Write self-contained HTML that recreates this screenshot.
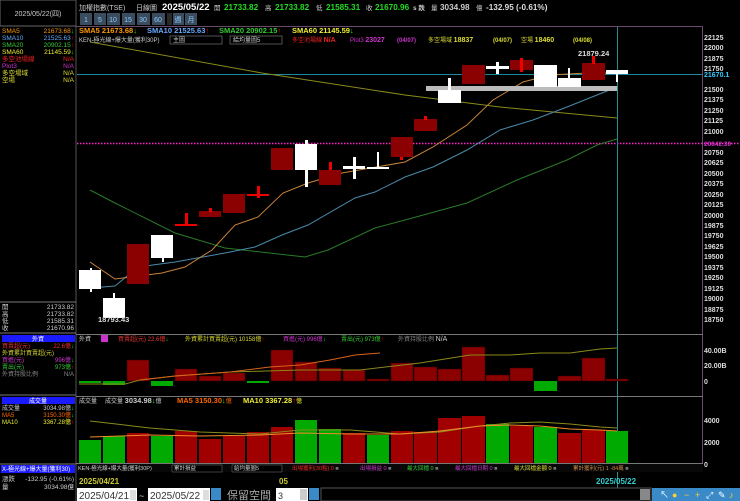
<!DOCTYPE html>
<html><head><meta charset="utf-8"><style>
html,body{margin:0;padding:0;background:#000;width:740px;height:501px;overflow:hidden}
svg{display:block}
text{font-family:"Liberation Sans","Noto Sans CJK TC",sans-serif}
</style></head><body>
<svg width="740" height="501" viewBox="0 0 740 501" xmlns="http://www.w3.org/2000/svg">
<rect width="740" height="501" fill="#000"/>
<!-- left panel -->
<rect x="0" y="0" width="76" height="26" fill="#000" stroke="#666" stroke-width="1"/>
<text x="38" y="16" font-size="7" fill="#ccc" text-anchor="middle">2025/05/22(四)</text>
<line x1="76" y1="0" x2="76" y2="501" stroke="#555"/>
<g font-size="6.5">
<text x="2" y="33" fill="#f90">SMA5</text><text x="74" y="33" fill="#f90" text-anchor="end">21673.68<tspan fill="#0f0">↓</tspan></text>
<text x="2" y="40" fill="#6af">SMA10</text><text x="74" y="40" fill="#6af" text-anchor="end">21525.63<tspan fill="#f00">↑</tspan></text>
<text x="2" y="47" fill="#3c3">SMA20</text><text x="74" y="47" fill="#3c3" text-anchor="end">20902.15<tspan fill="#f00">↑</tspan></text>
<text x="2" y="54" fill="#ee3">SMA60</text><text x="74" y="54" fill="#ee3" text-anchor="end">21145.59<tspan fill="#0f0">↓</tspan></text>
<text x="2" y="61" fill="#e22">多空池場線</text><text x="74" y="61" fill="#e22" text-anchor="end">N/A</text>
<text x="2" y="68" fill="#c3c">Plot3</text><text x="74" y="68" fill="#c3c" text-anchor="end">N/A</text>
<text x="2" y="75" fill="#dd3">多空場域</text><text x="74" y="75" fill="#dd3" text-anchor="end">N/A</text>
<text x="2" y="82" fill="#dd3">空場</text><text x="74" y="82" fill="#dd3" text-anchor="end">N/A</text>
</g>
<line x1="0" y1="302" x2="76" y2="302" stroke="#777"/>
<g font-size="6.5" fill="#ccc">
<text x="2" y="309">開</text><text x="74" y="309" text-anchor="end">21733.82</text>
<text x="2" y="316">高</text><text x="74" y="316" text-anchor="end">21733.82</text>
<text x="2" y="323">低</text><text x="74" y="323" text-anchor="end">21585.31</text>
<text x="2" y="330">收</text><text x="74" y="330" text-anchor="end">21670.96</text>
</g>
<line x1="0" y1="333" x2="76" y2="333" stroke="#777"/>
<rect x="2" y="335" width="73" height="7" fill="#1a1aff"/>
<text x="38" y="341" font-size="6" fill="#fff" text-anchor="middle">外資</text>
<g font-size="6">
<text x="2" y="348" fill="#e33">買賣超(元)</text><text x="74" y="348" fill="#e33" text-anchor="end">22.6億<tspan fill="#0f0">↓</tspan></text>
<text x="2" y="355" fill="#dd3">外資累計買賣超(元)</text>
<text x="2" y="362" fill="#c3c">買進(元)</text><text x="74" y="362" fill="#c3c" text-anchor="end">996億<tspan fill="#0f0">↓</tspan></text>
<text x="2" y="369" fill="#3c3">賣出(元)</text><text x="74" y="369" fill="#3c3" text-anchor="end">973億<tspan fill="#f00">↑</tspan></text>
<text x="2" y="376" fill="#888">外資持股比例</text><text x="74" y="376" fill="#888" text-anchor="end">N/A</text>
</g>
<line x1="0" y1="395" x2="76" y2="395" stroke="#777"/>
<rect x="2" y="397" width="73" height="7" fill="#1a1aff"/>
<text x="38" y="403" font-size="6" fill="#fff" text-anchor="middle">成交量</text>
<g font-size="6">
<text x="2" y="410" fill="#ccc">成交量</text><text x="74" y="410" fill="#ccc" text-anchor="end">3034.98億<tspan fill="#0f0">↓</tspan></text>
<text x="2" y="417" fill="#f60">MA5</text><text x="74" y="417" fill="#f60" text-anchor="end">3150.30億<tspan fill="#0f0">↓</tspan></text>
<text x="2" y="424" fill="#ee3">MA10</text><text x="74" y="424" fill="#ee3" text-anchor="end">3367.28億<tspan fill="#f00">↑</tspan></text>
</g>
<line x1="0" y1="464" x2="76" y2="464" stroke="#777"/>
<rect x="1" y="465" width="74" height="8" fill="#1a1aff"/>
<text x="2" y="471" font-size="6" fill="#fff">X-極光線+爆大量(獲利30)</text>
<g font-size="6.5" fill="#ccc">
<text x="2" y="481">漲跌</text><text x="74" y="481" text-anchor="end">-132.95 (-0.61%)</text>
<text x="2" y="489">量</text><text x="74" y="489" text-anchor="end">3034.98億</text>
</g>

<!-- top header -->
<text x="79" y="10" font-size="7" fill="#ccc">加權指數(TSE)</text>
<text x="136" y="10" font-size="7" fill="#ccc">日線圖</text>
<text x="162" y="10" font-size="9.5" font-weight="bold" fill="#fff">2025/05/22</text>
<g font-size="8.2" font-weight="bold">
<text x="214" y="10" font-size="6.5" font-weight="normal" fill="#ccc">開</text><text x="224" y="10" fill="#2d2">21733.82</text>
<text x="265" y="10" font-size="6.5" font-weight="normal" fill="#ccc">高</text><text x="275" y="10" fill="#2d2">21733.82</text>
<text x="316" y="10" font-size="6.5" font-weight="normal" fill="#ccc">低</text><text x="326" y="10" fill="#2d2">21585.31</text>
<text x="366" y="10" font-size="6.5" font-weight="normal" fill="#ccc">收</text><text x="375" y="10" fill="#2d2">21670.96</text>
<text x="413" y="10" font-size="6.5" fill="#ccc">s 跌</text><text x="431" y="10" font-size="6.5" font-weight="normal" fill="#ccc">量</text><text x="440" y="10" fill="#ccc">3034.98</text><text x="476" y="10" font-size="6.5" font-weight="normal" fill="#ccc">億</text>
<text x="486" y="10" fill="#ddd">-132.95 (-0.61%)</text>
</g>
<g font-size="7" fill="#8cf" text-anchor="middle">
<rect x="80" y="13" width="12" height="12" fill="#3b4c5e"/><text x="86" y="22">1</text>
<rect x="94" y="13" width="12" height="12" fill="#3b4c5e"/><text x="100" y="22">5</text>
<rect x="107" y="13" width="13" height="12" fill="#3b4c5e"/><text x="113" y="22">10</text>
<rect x="122" y="13" width="13" height="12" fill="#3b4c5e"/><text x="128" y="22">15</text>
<rect x="137" y="13" width="13" height="12" fill="#3b4c5e"/><text x="143" y="22">30</text>
<rect x="152" y="13" width="13" height="12" fill="#3b4c5e"/><text x="158" y="22">60</text>
<rect x="167" y="13" width="5" height="12" fill="#2a2a2a"/>
<rect x="173" y="13" width="11" height="12" fill="#3b4c5e"/><text x="178" y="22">週</text>
<rect x="185" y="13" width="12" height="12" fill="#3b4c5e"/><text x="191" y="22">月</text>
</g>
<!-- chart frame -->
<line x1="76" y1="26.5" x2="703" y2="26.5" stroke="#6a4a6a"/>
<line x1="702.5" y1="26" x2="702.5" y2="463" stroke="#6a4a6a"/>
<g font-size="7.5" font-weight="bold">
<text x="79" y="33" fill="#f90">SMA5 21673.68<tspan fill="#0f0">↓</tspan></text>
<text x="147" y="33" fill="#6af">SMA10 21525.63<tspan fill="#f00">↑</tspan></text>
<text x="219" y="33" fill="#3c3">SMA20 20902.15<tspan fill="#f00">↑</tspan></text>
<text x="292" y="33" fill="#ee3">SMA60 21145.59<tspan fill="#0f0">↓</tspan></text>
</g>
<g font-size="6">
<text x="79" y="42" fill="#ccc">KEN-極光線+爆大量(獲利30P)</text>
<rect x="170" y="36" width="52" height="8" fill="#000" stroke="#888" stroke-width="0.6"/><text x="173" y="42" fill="#ccc">主圖</text>
<rect x="230" y="36" width="52" height="8" fill="#000" stroke="#888" stroke-width="0.6"/><text x="233" y="42" fill="#ccc">給均量圖5</text>
<text x="292" y="42" fill="#e22">多空池場線 <tspan font-weight="bold" font-size="7">N/A</tspan></text>
<text x="350" y="42" fill="#c3c">Plot3 <tspan font-weight="bold" font-size="7">23027</tspan></text>
<text x="397" y="42" fill="#c3c" font-weight="bold">(04/07)</text>
<text x="428" y="42" fill="#dd3">多空場域 <tspan font-weight="bold" font-size="7">18837</tspan></text>
<text x="493" y="42" fill="#dd3" font-weight="bold">(04/07)</text>
<text x="521" y="42" fill="#dd3">空場 <tspan font-weight="bold" font-size="7">18460</tspan></text>
<text x="573" y="42" fill="#dd3" font-weight="bold">(04/08)</text>
</g>
<!-- right axis -->
<g font-size="7" font-weight="bold" fill="#ddd">
<text x="704" y="40">22125</text><text x="704" y="50">22000</text><text x="704" y="61">21875</text><text x="704" y="71">21750</text><text x="704" y="92">21500</text><text x="704" y="102">21375</text><text x="704" y="113">21250</text><text x="704" y="123">21125</text><text x="704" y="134">21000</text><text x="704" y="155">20750</text><text x="704" y="165">20625</text><text x="704" y="176">20500</text><text x="704" y="186">20375</text><text x="704" y="197">20250</text><text x="704" y="207">20125</text><text x="704" y="218">20000</text><text x="704" y="228">19875</text><text x="704" y="238">19750</text><text x="704" y="249">19625</text><text x="704" y="259">19500</text><text x="704" y="270">19375</text><text x="704" y="280">19250</text><text x="704" y="291">19125</text><text x="704" y="301">19000</text><text x="704" y="312">18875</text><text x="704" y="322">18750</text>
<text x="704" y="77" fill="#3cf">21670.1</text>
<text x="704" y="146" fill="#c3c" font-size="6.5">20842.30</text>
</g>
<line x1="77" y1="74.5" x2="702" y2="74.5" stroke="#1a8a9a"/>
<line x1="77" y1="143.5" x2="740" y2="143.5" stroke="#f2c" stroke-width="1.4" stroke-dasharray="1.5,1.5"/>
<line x1="617.5" y1="27" x2="617.5" y2="501" stroke="#2a8a9a"/>
<!-- MA lines -->
<polyline fill="none" stroke="#8a8a1a" stroke-width="1" points="90,42 262,73 405,95 500,107 617,118"/>
<polyline fill="none" stroke="#2a7a2a" stroke-width="1" points="90,190 115,203 175,233 225,248 305,257 328,250 375,228 405,220 467,203 517,180 567,160 597,145 617,139"/>
<polyline fill="none" stroke="#4a8aaa" stroke-width="1" points="90,288 115,286 138,267 175,262 225,253 255,247 282,235 308,225 355,198 375,192 405,177 433,167 467,150 500,130 533,120 567,107 617,87"/>
<polyline fill="none" stroke="#c8823a" stroke-width="1" points="90,262 115,279 162,273 185,267 212,250 235,225 258,217 283,193 308,183 342,173 405,162 433,147 467,125 493,100 523,82 550,75 587,73 607,73"/>
<rect x="426" y="86" width="191" height="5" fill="#bbb"/>
<!-- candles -->
<g fill="#fff">
<rect x="90" y="268" width="2" height="24"/><rect x="79" y="270" width="22" height="19"/>
<rect x="113" y="293" width="2" height="6"/><rect x="103" y="298" width="22" height="20"/>
<rect x="162" y="256" width="2" height="6"/><rect x="151" y="235" width="22" height="23"/>
<rect x="305" y="140" width="3" height="47"/><rect x="295" y="144" width="22" height="26"/>
<rect x="353" y="157" width="3" height="22"/><rect x="343" y="166" width="22" height="3"/>
<rect x="377" y="152" width="2" height="16"/><rect x="367" y="167" width="22" height="2"/>
<rect x="448" y="78" width="3" height="14"/><rect x="438" y="90" width="23" height="13"/>
<rect x="496" y="62" width="3" height="12"/><rect x="486" y="66" width="23" height="3"/>
<rect x="534" y="65" width="23" height="22"/>
<rect x="568" y="68" width="2" height="12"/><rect x="558" y="78" width="23" height="9"/>
<rect x="616" y="72" width="2" height="10"/><rect x="606" y="70" width="22" height="4"/>
</g>
<g fill="#8b0000">
<rect x="127" y="244" width="22" height="40"/>
<rect x="199" y="211" width="22" height="6"/>
<rect x="223" y="194" width="22" height="19"/>
<rect x="271" y="148" width="22" height="22"/>
<rect x="319" y="170" width="22" height="15"/>
<rect x="391" y="137" width="22" height="20"/>
<rect x="414" y="119" width="23" height="12"/>
<rect x="462" y="65" width="23" height="19"/>
<rect x="510" y="60" width="23" height="10"/>
<rect x="582" y="63" width="23" height="17"/>
</g>
<g fill="#e00">
<rect x="175" y="224" width="22" height="2"/><rect x="185" y="213" width="3" height="12"/>
<rect x="209" y="208" width="3" height="4"/>
<rect x="247" y="194" width="22" height="2"/><rect x="257" y="186" width="3" height="12"/>
<rect x="329" y="162" width="3" height="8"/>
<rect x="400" y="157" width="3" height="3"/>
<rect x="424" y="116" width="3" height="4"/>
<rect x="520" y="58" width="3" height="14"/>
<rect x="592" y="56" width="3" height="8"/>
</g>
<text x="98" y="322" font-size="7.5" font-weight="bold" fill="#ddd">18793.43</text>
<text x="578" y="56" font-size="7.5" font-weight="bold" fill="#ddd">21879.24</text>

<!-- foreign panel -->
<line x1="76" y1="334.5" x2="703" y2="334.5" stroke="#777"/>
<text x="79" y="341" font-size="6" fill="#ccc">外資</text>
<rect x="101" y="335" width="7" height="7" fill="#c3c"/>
<g font-size="6">
<text x="118" y="341" fill="#e33">買賣超(元) 22.6億<tspan fill="#0f0">↓</tspan></text>
<text x="185" y="341" fill="#dd3">外資累計買賣超(元) 10158億<tspan fill="#f00">↑</tspan></text>
<text x="283" y="341" fill="#c3c">買進(元) 996億<tspan fill="#0f0">↓</tspan></text>
<text x="341" y="341" fill="#3c3">賣出(元) 973億<tspan fill="#f00">↑</tspan></text>
<text x="398" y="341" fill="#888">外資持股比例 <tspan fill="#ccc" font-size="7">N/A</tspan></text>
</g>
<g fill="#8b0000" stroke="#300" stroke-width="0.5">
<rect x="127" y="360" width="22" height="21"/><rect x="175" y="369" width="22" height="12"/><rect x="199" y="376" width="22" height="5"/><rect x="223" y="373" width="22" height="8"/>
<rect x="271" y="350" width="22" height="31"/><rect x="295" y="362" width="22" height="19"/><rect x="319" y="368" width="22" height="13"/><rect x="343" y="370" width="22" height="11"/><rect x="367" y="379" width="22" height="2"/><rect x="391" y="363" width="22" height="18"/><rect x="414" y="367" width="23" height="14"/><rect x="438" y="369" width="23" height="12"/><rect x="462" y="347" width="23" height="34"/><rect x="486" y="375" width="23" height="6"/><rect x="510" y="368" width="23" height="13"/><rect x="558" y="376" width="23" height="5"/><rect x="582" y="358" width="23" height="23"/><rect x="606" y="379" width="22" height="2"/>
</g>
<g fill="#0a0">
<rect x="79" y="381" width="22" height="2"/><rect x="103" y="381" width="22" height="4"/><rect x="151" y="381" width="22" height="5"/><rect x="247" y="381" width="22" height="2"/><rect x="534" y="381" width="23" height="10"/>
</g>
<polyline fill="none" stroke="#8a8a1a" points="79,384 125,384 140,380 175,376 230,372 300,370 360,370 420,363 470,355 510,355 540,353 570,353 600,349 617,348"/>
<polyline fill="none" stroke="#d7631a" points="140,380 175,376 230,372 270,367 300,365 330,360 355,355 380,353"/>
<g font-size="7" font-weight="bold" fill="#ddd"><text x="704" y="353">40.00B</text><text x="704" y="368">20.00B</text><text x="704" y="384">0</text></g>

<!-- volume panel -->
<line x1="76" y1="396.5" x2="703" y2="396.5" stroke="#777"/>
<text x="79" y="403" font-size="6" fill="#ccc">成交量</text>
<g font-size="7.5" font-weight="bold">
<text x="105" y="403" fill="#ccc"><tspan font-size="6" font-weight="normal">成交量 </tspan>3034.98<tspan fill="#0f0">↓</tspan><tspan font-size="6" font-weight="normal">億</tspan></text>
<text x="177" y="403" fill="#f60">MA5 3150.30<tspan fill="#0f0">↓</tspan><tspan font-size="6" font-weight="normal">億</tspan></text>
<text x="243" y="403" fill="#ee3">MA10 3367.28<tspan fill="#f00">↑</tspan><tspan font-size="6" font-weight="normal">億</tspan></text>
</g>
<g fill="#0a0">
<rect x="79" y="440" width="22" height="23"/><rect x="103" y="436" width="22" height="27"/><rect x="151" y="436" width="22" height="27"/><rect x="295" y="420" width="22" height="43"/><rect x="319" y="429" width="22" height="34"/><rect x="367" y="435" width="22" height="28"/><rect x="486" y="424" width="23" height="39"/><rect x="534" y="427" width="23" height="36"/><rect x="606" y="431" width="22" height="32"/>
</g>
<g fill="#a00000">
<rect x="127" y="433" width="22" height="30"/><rect x="175" y="431" width="22" height="32"/><rect x="199" y="439" width="22" height="24"/><rect x="223" y="436" width="22" height="27"/><rect x="247" y="432" width="22" height="31"/><rect x="271" y="427" width="22" height="36"/><rect x="343" y="433" width="22" height="30"/><rect x="391" y="431" width="22" height="32"/><rect x="414" y="432" width="23" height="31"/><rect x="438" y="418" width="23" height="45"/><rect x="462" y="416" width="23" height="47"/><rect x="510" y="426" width="23" height="37"/><rect x="558" y="433" width="23" height="30"/><rect x="582" y="430" width="23" height="33"/>
</g>
<polyline fill="none" stroke="#8a8a1a" points="90,421 150,428 200,432 260,434 300,430 350,430 400,434 440,432 480,426 510,423 540,422 570,424 600,427 617,428"/>
<polyline fill="none" stroke="#f28a2a" points="90,437 150,435 200,436 260,435 300,433 350,434 400,434 440,431 480,426 510,425 540,426 570,429 600,430 617,431"/>
<g font-size="7" font-weight="bold" fill="#ddd"><text x="704" y="423">4000</text><text x="704" y="445">2000</text><text x="704" y="467">0</text></g>

<!-- indicator bar -->
<line x1="76" y1="463.5" x2="703" y2="463.5" stroke="#777"/>
<rect x="77" y="464" width="626" height="8" fill="#080808"/>
<g font-size="5.5">
<text x="78" y="470" fill="#ccc">KEN-極光線+爆大量(獲利30P)</text>
<rect x="172" y="465" width="50" height="7" fill="#000" stroke="#777" stroke-width="0.5"/><text x="174" y="470" fill="#ccc">累計損益</text>
<rect x="232" y="465" width="50" height="7" fill="#000" stroke="#777" stroke-width="0.5"/><text x="234" y="470" fill="#ccc">給均量圖5</text>
<text x="292" y="470" fill="#e22">出場獲利(30點) 0 <tspan fill="#777">■</tspan></text>
<text x="360" y="470" fill="#c3c">出場損益 0 <tspan fill="#777">■</tspan></text>
<text x="407" y="470" fill="#3c3">最大回檔 0 <tspan fill="#777">■</tspan></text>
<text x="455" y="470" fill="#c3c">最大回檔日期 0 <tspan fill="#777">■</tspan></text>
<text x="514" y="470" fill="#dd3">最大回檔金額 0 <tspan fill="#777">■</tspan></text>
<text x="573" y="470" fill="#c84">累計獲利(元) 1 -84萬 <tspan fill="#777">■</tspan></text>
</g>
<text x="79" y="484" font-size="8" font-weight="bold" fill="#cc3">2025/04/21</text>
<text x="279" y="484" font-size="8" font-weight="bold" fill="#cc3">05</text>
<text x="596" y="484" font-size="8" font-weight="bold" fill="#3cc">2025/05/22</text>
<!-- bottom controls -->
<rect x="77" y="488" width="60" height="13" fill="#fff"/><text x="79" y="499" font-size="10" fill="#333">2025/04/21</text><rect x="130" y="490" width="6" height="10" fill="#ddd"/>
<text x="139" y="499" font-size="9" fill="#ccc">~</text>
<rect x="148" y="488" width="62" height="13" fill="#fff"/><text x="150" y="499" font-size="10" fill="#333">2025/05/22</text><rect x="203" y="490" width="6" height="10" fill="#ddd"/>
<rect x="211" y="488" width="10" height="12" fill="#3a8ac8"/>
<text x="227" y="499" font-size="11" fill="#aaa">保留空間</text>
<rect x="276" y="488" width="32" height="13" fill="#fff"/><text x="278" y="499" font-size="9" fill="#333">3</text><rect x="300" y="489" width="7" height="11" fill="#ccc"/>
<rect x="309" y="488" width="10" height="12" fill="#3a8ac8"/>
<rect x="321" y="488" width="330" height="13" fill="#000" stroke="#555"/>
<rect x="640" y="489" width="10" height="11" fill="#888"/>
<rect x="652" y="488" width="88" height="13" fill="#3a8ac8"/>
<g fill="#fff" font-size="9"><text x="660" y="498">↖</text><text x="672" y="498" fill="#fc3">●</text><text x="684" y="498" fill="#fc3">−</text><text x="695" y="498" fill="#fc3">+</text><text x="706" y="498">⤢</text><text x="718" y="498">✎</text><text x="729" y="498" fill="#fc3">♪</text></g>
</svg>
</body></html>
